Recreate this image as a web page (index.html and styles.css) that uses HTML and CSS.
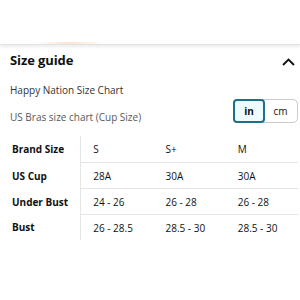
FILE: index.html
```html
<!DOCTYPE html>
<html>
<head>
<meta charset="utf-8">
<link rel="stylesheet" href="styles.css">
</head>
<body>
<div class="topbar"><div class="tab-hint"></div></div>
<section class="guide">
  <div class="guide-head">
    <h2 class="title">Size guide</h2>
    <svg class="chevron" width="13" height="8" viewBox="0 0 13 8"><path d="M1 7 L6.5 1.5 L12 7" fill="none" stroke="#111" stroke-width="1.8"/></svg>
  </div>
  <div class="chart-name">Happy Nation Size Chart</div>
  <div class="sub-row">
    <div class="sub">US Bras size chart (Cup Size)</div>
    <div class="toggle">
      <span class="seg seg-on">in</span>
      <span class="seg">cm</span>
    </div>
  </div>
  <table class="chart">
    <tr><th>Brand Size</th><td>S</td><td>S+</td><td>M</td></tr>
    <tr><th>US Cup</th><td>28A</td><td>30A</td><td>30A</td></tr>
    <tr><th>Under Bust</th><td>24 - 26</td><td>26 - 28</td><td>26 - 28</td></tr>
    <tr><th>Bust</th><td>26 - 28.5</td><td>28.5 - 30</td><td>28.5 - 30</td></tr>
  </table>
</section>
</body>
</html>
```
FILE: styles.css
```css
html, body { margin: 0; padding: 0; background: #fff; }
body { width: 300px; height: 300px; overflow: hidden; font-family: "Open Sans", "Noto Sans", sans-serif; color: #0f1111; }
.topbar { height: 44px; border-bottom: 1px solid #e3e3e3; box-shadow: 0 2px 3px rgba(0,0,0,0.08); position: relative; }
.tab-hint { position: absolute; left: 35px; bottom: 0; width: 70px; height: 2px; background: linear-gradient(90deg, rgba(255,200,160,0), rgba(250,190,150,0.45), rgba(255,200,160,0)); }
.guide { padding: 0 5px 0 10px; }
.guide-head { display: flex; justify-content: space-between; align-items: center; height: 30px; }
.title { margin: 0; font-size: 13px; font-weight: 700; letter-spacing: -0.1px; }
.chevron { margin-top: 4px; }
.chart-name { font-size: 10px; color: #333; margin-top: 8px; height: 15px; line-height: 15px; }
.sub-row { display: flex; justify-content: space-between; align-items: flex-end; margin-top: 1px; }
.sub { font-size: 10px; color: #565959; line-height: 14px; margin-bottom: -1px; }
.toggle { display: flex; border: 1px solid #c8cccc; border-radius: 5px; height: 22px; margin-right: -3px; }
.seg { display: flex; align-items: center; justify-content: center; font-size: 10px; color: #0f1111; width: 33px; }
.seg-on { background: #edfdff; border: 2px solid #1f6f8b; border-radius: 4px; margin: -1px; width: 28px; font-weight: 700; }
.chart { border-collapse: collapse; margin-top: 13px; width: 288px; }
.chart th { text-align: left; font-size: 10px; font-weight: 700; width: 68px; padding: 0 0 0 2px; border-right: 1px solid #e3e6e6; height: 25px; }
.chart td { font-size: 10px; padding: 0 0 0 12px; height: 25px; border-top: 1px solid #e3e6e6; width: 60px; }
.chart tr:first-child td { border-top: none; }
.chart tr:first-child th, .chart tr:first-child td { height: 26px; }
```
